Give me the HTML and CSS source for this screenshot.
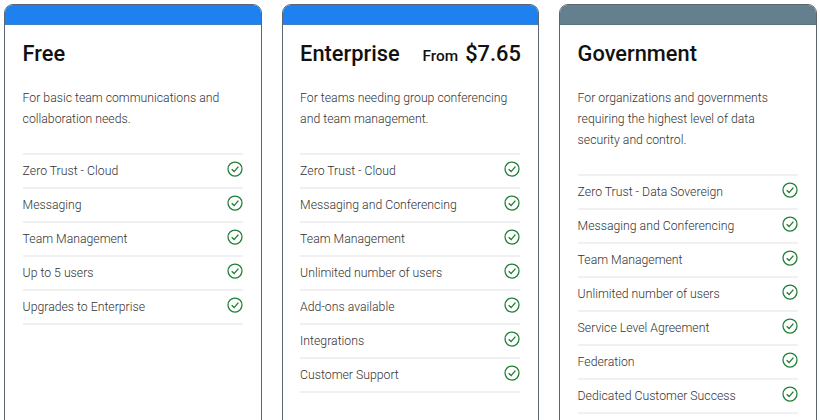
FILE: index.html
```html
<!DOCTYPE html>
<html lang="en">
<head>
<meta charset="utf-8">
<title>Plans</title>
<link rel="stylesheet" href="styles.css">
</head>
<body>
<svg class="sprite" width="0" height="0" aria-hidden="true">
  <symbol id="check" viewBox="0 0 16 16">
    <circle cx="8" cy="8" r="7" fill="none" stroke="currentColor" stroke-width="1.25"/>
    <path d="M4.7 8.3 7.1 10.6 11.4 5.6" fill="none" stroke="currentColor" stroke-width="1.35"/>
  </symbol>
</svg>
<main class="plans">
  <section class="card">
    <div class="band"></div>
    <div class="body">
      <header class="head"><h2>Free</h2></header>
      <p class="desc">For basic team communications and collaboration needs.</p>
      <ul class="features">
        <li><span>Zero Trust - Cloud</span><svg class="tick"><use href="#check"/></svg></li>
        <li><span>Messaging</span><svg class="tick"><use href="#check"/></svg></li>
        <li><span>Team Management</span><svg class="tick"><use href="#check"/></svg></li>
        <li><span>Up to 5 users</span><svg class="tick"><use href="#check"/></svg></li>
        <li><span>Upgrades to Enterprise</span><svg class="tick"><use href="#check"/></svg></li>
      </ul>
    </div>
  </section>
  <section class="card">
    <div class="band"></div>
    <div class="body">
      <header class="head"><h2>Enterprise</h2><div class="price"><small>From</small> <strong>$7.65</strong></div></header>
      <p class="desc">For teams needing group conferencing and team management.</p>
      <ul class="features">
        <li><span>Zero Trust - Cloud</span><svg class="tick"><use href="#check"/></svg></li>
        <li><span>Messaging and Conferencing</span><svg class="tick"><use href="#check"/></svg></li>
        <li><span>Team Management</span><svg class="tick"><use href="#check"/></svg></li>
        <li><span>Unlimited number of users</span><svg class="tick"><use href="#check"/></svg></li>
        <li><span>Add-ons available</span><svg class="tick"><use href="#check"/></svg></li>
        <li><span>Integrations</span><svg class="tick"><use href="#check"/></svg></li>
        <li><span>Customer Support</span><svg class="tick"><use href="#check"/></svg></li>
      </ul>
    </div>
  </section>
  <section class="card">
    <div class="band band-gov"></div>
    <div class="body">
      <header class="head"><h2>Government</h2></header>
      <p class="desc">For organizations and governments requiring the highest level of data security and control.</p>
      <ul class="features">
        <li><span>Zero Trust - Data Sovereign</span><svg class="tick"><use href="#check"/></svg></li>
        <li><span>Messaging and Conferencing</span><svg class="tick"><use href="#check"/></svg></li>
        <li><span>Team Management</span><svg class="tick"><use href="#check"/></svg></li>
        <li><span>Unlimited number of users</span><svg class="tick"><use href="#check"/></svg></li>
        <li><span>Service Level Agreement</span><svg class="tick"><use href="#check"/></svg></li>
        <li><span>Federation</span><svg class="tick"><use href="#check"/></svg></li>
        <li><span>Dedicated Customer Success</span><svg class="tick"><use href="#check"/></svg></li>
      </ul>
    </div>
  </section>
</main>
</body>
</html>
```
FILE: styles.css
```css
html, body {
  margin: 0;
  height: 420px;
  overflow: hidden;
  background: #fff;
  font-family: Roboto, "Liberation Sans", sans-serif;
}
.sprite { position: absolute; }
.plans {
  display: flex;
  gap: 20px;
  padding: 4px 0 0 4px;
  height: 420px;
  box-sizing: border-box;
  overflow: hidden;
}
.card {
  width: 257.5px;
  height: 520px;
  flex: none;
  box-sizing: border-box;
  border: 1px solid #5c6670;
  border-radius: 9px;
  overflow: hidden;
}
.band { height: 19px; background: #1f80f0; border-bottom: 1px solid #3f7fc4; }
.band-gov { background: #64808f; border-bottom-color: #5c7482; }
.body { padding: 15px 18px 0 17.6px; }
.head {
  display: flex;
  justify-content: space-between;
  align-items: baseline;
  height: 27px;
}
h2 {
  margin: 0;
  font-size: 21.8px;
  font-weight: 500;
  line-height: 27px;
  color: #111;
}
.price { color: #111; font-weight: 500; margin-right: -0.8px; }
.price small { font-size: 15.4px; font-weight: 500; margin-right: 3px; }
.price strong { font-size: 21.8px; font-weight: 500; }
.desc {
  margin: 21px 0 23px;
  font-size: 12.25px;
  font-weight: 300;
  line-height: 21px;
  color: #333;
}
.features {
  list-style: none;
  margin: 0;
  padding: 0;
  border-top: 2px solid #f0f0f0;
}
.features li {
  display: flex;
  justify-content: space-between;
  align-items: center;
  height: 32px;
  border-bottom: 2px solid #f0f0f0;
  font-size: 12.25px;
  font-weight: 300;
  color: #333;
}
.tick { width: 16px; height: 16px; color: #1e7e34; margin: -5px 0 0; }
```
